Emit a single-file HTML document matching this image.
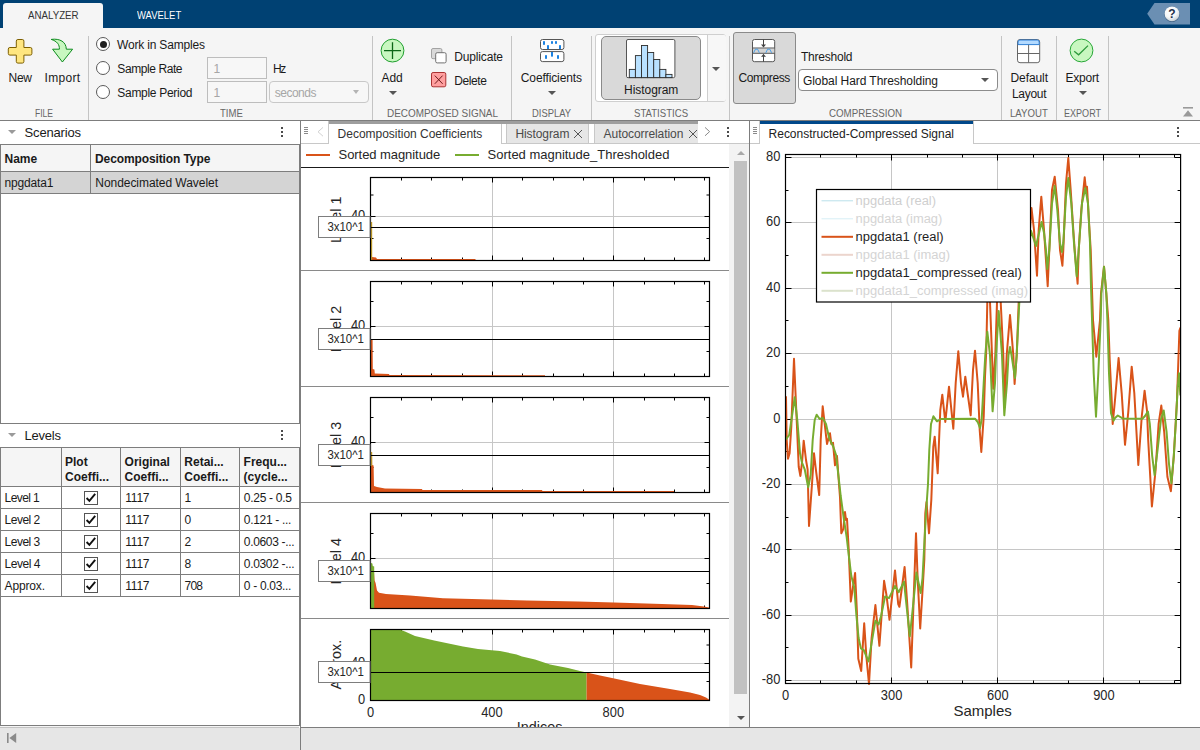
<!DOCTYPE html>
<html lang="en">
<head>
<meta charset="utf-8">
<title>Wavelet Signal Analyzer</title>
<style>
html,body{margin:0;padding:0;}
body{width:1200px;height:750px;overflow:hidden;position:relative;background:#fff;font-family:"Liberation Sans","DejaVu Sans",sans-serif;font-size:12px;color:#1a1a1a;}
.abs{position:absolute;}
.t{position:absolute;white-space:nowrap;line-height:16px;height:16px;}
.ui{font-family:"DejaVu Sans","Liberation Sans",sans-serif;}
#hdr{left:0;top:0;width:1200px;height:28px;background:#004173;}
#strip{left:0;top:28px;width:1200px;height:92px;background:#f5f5f5;}
#stripline{left:0;top:120px;width:1200px;height:1px;background:#7d7d7d;}
.vdiv{position:absolute;top:36px;width:1px;height:84px;background:#c4c4c4;}
.sec{position:absolute;top:105px;height:16px;line-height:16px;font-size:11.5px;color:#5a5a5a;white-space:nowrap;transform-origin:0 50%;}
.lbl{position:absolute;white-space:nowrap;font-size:12px;line-height:16px;color:#1a1a1a;transform-origin:0 50%;}
.c{transform-origin:50% 50%;text-align:center;}
.arrow{position:absolute;width:0;height:0;border-left:4px solid transparent;border-right:4px solid transparent;border-top:4px solid #5f5f5f;}
#status{left:0;top:728px;width:1200px;height:22px;background:#e6e6e6;}
</style>
</head>
<body>
<!-- HEADER -->
<div class="abs" id="hdr"></div>
<div class="abs" id="strip"></div>
<div class="abs" id="stripline"></div>
<div class="abs" id="status"></div>
<div class="abs" style="left:3px;top:3px;width:100px;height:26px;background:#f5f5f5;border-radius:3px 3px 0 0;"></div>
<div class="t" style="left:27.90px;top:7.00px;font-size:11px;line-height:16px;height:16px;color:#333;transform:scaleX(0.8838);transform-origin:0 50%;">ANALYZER</div>
<div class="t" style="left:137.00px;top:7.00px;font-size:11px;line-height:16px;height:16px;color:#fff;transform:scaleX(0.8603);transform-origin:0 50%;">WAVELET</div>
<svg class="abs" style="left:1146px;top:2px" width="46" height="24" viewBox="0 0 46 24"><defs><radialGradient id="hg" cx="0.4" cy="0.3" r="0.8"><stop offset="0" stop-color="#ffffff"/><stop offset="0.55" stop-color="#f4f6f7"/><stop offset="1" stop-color="#b9c3c9"/></radialGradient></defs><path d="M1.2 11.8 L8.5 1 H44 V22.6 H8.5 Z" fill="#6b8fb3"/><circle cx="26" cy="12.2" r="7.7" fill="#3d5f83"/><circle cx="26" cy="11.8" r="7.4" fill="url(#hg)"/><text x="26" y="16.2" text-anchor="middle" font-family="Liberation Sans, sans-serif" font-weight="bold" font-size="12" fill="#22304a">?</text></svg>
<div class="vdiv" style="left:88px"></div>
<div class="vdiv" style="left:372px"></div>
<div class="vdiv" style="left:511px"></div>
<div class="vdiv" style="left:591px"></div>
<div class="vdiv" style="left:729px"></div>
<div class="vdiv" style="left:1001px"></div>
<div class="vdiv" style="left:1056px"></div>
<div class="vdiv" style="left:1108px"></div>
<svg class="abs" style="left:6px;top:37px" width="28" height="28" viewBox="0 0 28 28"><path d="M11.9 2.5 h4.4 a1.6 1.6 0 0 1 1.6 1.6 v6.4 h6.4 a1.6 1.6 0 0 1 1.6 1.6 v4.4 a1.6 1.6 0 0 1 -1.6 1.6 h-6.4 v6.4 a1.6 1.6 0 0 1 -1.6 1.6 h-4.4 a1.6 1.6 0 0 1 -1.6 -1.6 v-6.4 h-6.4 a1.6 1.6 0 0 1 -1.6 -1.6 v-4.4 a1.6 1.6 0 0 1 1.6 -1.6 h6.4 v-6.4 a1.6 1.6 0 0 1 1.6 -1.6 z" fill="#ffe680" stroke="#7d5f00" stroke-width="1"/></svg>
<svg class="abs" style="left:49px;top:37px" width="26" height="28" viewBox="0 0 26 28"><path d="M2.2 2.4 C11 1.2 17.2 5 17.3 12.2 H23.6 L13.4 25 L3.6 12.2 H10.4 C10.6 7.5 8 4.2 2.2 2.4 Z" fill="#c8f7c0" stroke="#0d8c1d" stroke-width="1" stroke-linejoin="round"/></svg>
<div class="t" style="left:8.60px;top:70.00px;font-size:12px;line-height:16px;height:16px;color:#1a1a1a;letter-spacing:-0.363px;">New</div>
<div class="t" style="left:44.60px;top:70.00px;font-size:12px;line-height:16px;height:16px;color:#1a1a1a;letter-spacing:0.280px;">Import</div>
<div class="t" style="left:35.20px;top:105.00px;font-size:11px;line-height:16px;height:16px;color:#666;transform:scaleX(0.7785);transform-origin:0 50%;">FILE</div>
<div class="abs" style="left:96px;top:37px;width:14px;height:14px;border-radius:50%;background:#fff;border:1px solid #5a5a5a;box-sizing:border-box"></div>
<div class="abs" style="left:99.5px;top:40.5px;width:7px;height:7px;border-radius:50%;background:#1f1f1f"></div>
<div class="abs" style="left:96px;top:61px;width:14px;height:14px;border-radius:50%;background:#fff;border:1px solid #5a5a5a;box-sizing:border-box"></div>
<div class="abs" style="left:96px;top:85px;width:14px;height:14px;border-radius:50%;background:#fff;border:1px solid #5a5a5a;box-sizing:border-box"></div>
<div class="t" style="left:117.00px;top:37.20px;font-size:12px;line-height:16px;height:16px;color:#1a1a1a;letter-spacing:-0.179px;">Work in Samples</div>
<div class="t" style="left:117.30px;top:61.20px;font-size:12px;line-height:16px;height:16px;color:#1a1a1a;letter-spacing:-0.417px;">Sample Rate</div>
<div class="t" style="left:117.30px;top:85.20px;font-size:12px;line-height:16px;height:16px;color:#1a1a1a;letter-spacing:-0.296px;">Sample Period</div>
<div class="abs" style="left:207px;top:57px;width:60px;height:22px;background:#f7f7f7;border:1px solid #bdbdbd;box-sizing:border-box;"></div>
<div class="abs" style="left:207px;top:81px;width:60px;height:22px;background:#f7f7f7;border:1px solid #bdbdbd;box-sizing:border-box;"></div>
<div class="t" style="left:213.60px;top:61.20px;font-size:12px;line-height:16px;height:16px;color:#a6a6a6;">1</div>
<div class="t" style="left:213.60px;top:85.20px;font-size:12px;line-height:16px;height:16px;color:#a6a6a6;">1</div>
<div class="t" style="left:273.00px;top:61.20px;font-size:12px;line-height:16px;height:16px;color:#1a1a1a;letter-spacing:-1.325px;">Hz</div>
<div class="abs" style="left:269px;top:81px;width:100px;height:22px;background:#f7f7f7;border:1px solid #c8c8c8;box-sizing:border-box;border-radius:4px;"></div>
<div class="t" style="left:274.80px;top:85.20px;font-size:12px;line-height:16px;height:16px;color:#a6a6a6;letter-spacing:-0.508px;">seconds</div>
<div class="abs" style="left:352.5px;top:90px;width:0;height:0;border-left:3.5px solid transparent;border-right:3.5px solid transparent;border-top:4px solid #b4b4b4;"></div>
<div class="t" style="left:219.50px;top:105.00px;font-size:11px;line-height:16px;height:16px;color:#666;transform:scaleX(0.8686);transform-origin:0 50%;">TIME</div>
<svg class="abs" style="left:380px;top:38px" width="26" height="26" viewBox="0 0 26 26"><circle cx="12.5" cy="12.6" r="11.4" fill="#c8f7c0" stroke="#1f9e2e" stroke-width="1"/><path d="M4 12.6 H21 M12.5 4.2 V21" stroke="#0b6616" stroke-width="1.3" fill="none"/></svg>
<div class="t" style="left:381.50px;top:70.00px;font-size:12px;line-height:16px;height:16px;color:#1a1a1a;letter-spacing:-0.037px;">Add</div>
<div class="abs" style="left:389.0px;top:91.3px;width:0;height:0;border-left:4.0px solid transparent;border-right:4.0px solid transparent;border-top:4px solid #555;"></div>
<svg class="abs" style="left:430px;top:47px" width="18" height="18" viewBox="0 0 18 18"><rect x="1.5" y="1.5" width="10.4" height="10.2" rx="1.5" fill="#d9d9d9" stroke="#a3a3a3"/><rect x="5.7" y="5.7" width="10.4" height="10.2" rx="1.5" fill="#fff" stroke="#707070"/></svg>
<div class="t" style="left:454.20px;top:49.00px;font-size:12px;line-height:16px;height:16px;color:#1a1a1a;letter-spacing:-0.150px;">Duplicate</div>
<svg class="abs" style="left:430px;top:71px" width="18" height="18" viewBox="0 0 18 18"><rect x="1.5" y="1.5" width="14.3" height="14.3" rx="1.6" fill="#ff9f9f" stroke="#a93232"/><path d="M4.8 4.6 L12.6 12.8 M12.6 4.6 L4.8 12.8" stroke="#6d1b1b" stroke-width="1" fill="none"/></svg>
<div class="t" style="left:454.20px;top:73.00px;font-size:12px;line-height:16px;height:16px;color:#1a1a1a;letter-spacing:-0.390px;">Delete</div>
<div class="t" style="left:387.00px;top:105.00px;font-size:11px;line-height:16px;height:16px;color:#666;transform:scaleX(0.9034);transform-origin:0 50%;">DECOMPOSED SIGNAL</div>
<svg class="abs" style="left:539px;top:38px" width="27" height="26" viewBox="0 0 27 26"><rect x="1.5" y="1.5" width="23.4" height="10" rx="2" fill="#fff" stroke="#555"/><rect x="1.5" y="13.6" width="23.4" height="10" rx="2" fill="#fff" stroke="#555"/><g fill="#1b82e2"><rect x="4" y="3.2" width="2" height="3.6"/><rect x="8" y="7.2" width="2" height="3.8"/><rect x="12" y="3.2" width="2" height="2.6"/><rect x="16" y="3.2" width="2" height="2.6"/><rect x="20" y="7.2" width="2" height="3.8"/><rect x="6" y="17.2" width="2" height="3.6"/><rect x="12" y="14" width="2" height="4.6"/><rect x="18" y="17.2" width="2" height="3.6"/></g></svg>
<div class="t" style="left:520.80px;top:70.00px;font-size:12px;line-height:16px;height:16px;color:#1a1a1a;letter-spacing:-0.118px;">Coefficients</div>
<div class="abs" style="left:547.5px;top:91.3px;width:0;height:0;border-left:4.0px solid transparent;border-right:4.0px solid transparent;border-top:4px solid #555;"></div>
<div class="t" style="left:531.50px;top:105.00px;font-size:11px;line-height:16px;height:16px;color:#666;transform:scaleX(0.8548);transform-origin:0 50%;">DISPLAY</div>
<div class="abs" style="left:595px;top:34px;width:131px;height:68px;background:#fff;border:1px solid #cfcfcf;box-sizing:border-box;border-radius:3px;"></div>
<div class="abs" style="left:707px;top:35px;width:18px;height:66px;background:#f7f7f7;border-left:1px solid #cfcfcf;border-radius:0 2px 2px 0;"></div>
<div class="abs" style="left:601px;top:36px;width:100px;height:64px;background:#d9d9d9;border:1px solid #8a8a8a;box-sizing:border-box;border-radius:5px;"></div>
<svg class="abs" style="left:625px;top:38px" width="52" height="42" viewBox="625 38 52 42"><rect x="626.5" y="39.5" width="48.4" height="38.2" rx="1.5" fill="#fff" stroke="#555"/><rect x="629.3" y="69.4" width="6.1" height="8.2" fill="#b9e1ff" stroke="#2d2d2d" stroke-width="0.9"/><rect x="635.4" y="55.6" width="6.1" height="22.0" fill="#b9e1ff" stroke="#2d2d2d" stroke-width="0.9"/><rect x="641.5" y="45.5" width="6.1" height="32.1" fill="#b9e1ff" stroke="#2d2d2d" stroke-width="0.9"/><rect x="647.6" y="52.5" width="6.1" height="25.1" fill="#b9e1ff" stroke="#2d2d2d" stroke-width="0.9"/><rect x="653.7" y="59.5" width="6.1" height="18.1" fill="#b9e1ff" stroke="#2d2d2d" stroke-width="0.9"/><rect x="659.8" y="69.4" width="6.1" height="8.2" fill="#b9e1ff" stroke="#2d2d2d" stroke-width="0.9"/><rect x="665.9" y="74.4" width="6.1" height="3.2" fill="#b9e1ff" stroke="#2d2d2d" stroke-width="0.9"/></svg>
<div class="t" style="left:624.00px;top:82.00px;font-size:12px;line-height:16px;height:16px;color:#1a1a1a;letter-spacing:-0.041px;">Histogram</div>
<div class="abs" style="left:712.0px;top:67px;width:0;height:0;border-left:4.0px solid transparent;border-right:4.0px solid transparent;border-top:4px solid #555;"></div>
<div class="t" style="left:633.50px;top:105.00px;font-size:11px;line-height:16px;height:16px;color:#666;transform:scaleX(0.8727);transform-origin:0 50%;">STATISTICS</div>
<div class="abs" style="left:733px;top:32px;width:63px;height:72px;background:#d9d9d9;border:1px solid #8a8a8a;box-sizing:border-box;border-radius:3px;"></div>
<svg class="abs" style="left:751px;top:38px" width="26" height="26" viewBox="751 38 26 26"><rect x="752.5" y="39.5" width="22.2" height="22.2" rx="2" fill="#fff" stroke="#555"/><rect x="753" y="48.4" width="21.2" height="4.6" fill="#d4d4d4"/><path d="M752.5 48 H774.7 M752.5 53.3 H774.7" stroke="#555" stroke-width="1" fill="none"/><path d="M753.6 52.8 L755.4 49.2 L757.6 49.2 L759.4 52.8 M765.8 52.8 L767.6 49.2 L769.8 49.2 L771.6 52.8" stroke="#3c9cec" stroke-width="0.9" fill="none"/><path d="M763.5 39.5 V47 M763.5 61.7 V54.3" stroke="#444" stroke-width="1" fill="none"/><path d="M761 44.6 H766 L763.5 47.4 Z M761 56.7 H766 L763.5 53.9 Z" fill="#444"/></svg>
<div class="t" style="left:738.40px;top:70.00px;font-size:12px;line-height:16px;height:16px;color:#1a1a1a;letter-spacing:-0.389px;">Compress</div>
<div class="t" style="left:801.00px;top:49.00px;font-size:12px;line-height:16px;height:16px;color:#1a1a1a;letter-spacing:-0.234px;">Threshold</div>
<div class="abs" style="left:798px;top:69px;width:200px;height:22px;background:#fff;border:1px solid #8c8c8c;box-sizing:border-box;border-radius:4px;"></div>
<div class="t" style="left:803.00px;top:73.00px;font-size:12px;line-height:16px;height:16px;color:#1a1a1a;letter-spacing:-0.065px;">Global Hard Thresholding</div>
<div class="abs" style="left:980.5px;top:78px;width:0;height:0;border-left:4.0px solid transparent;border-right:4.0px solid transparent;border-top:4px solid #555;"></div>
<div class="t" style="left:829.00px;top:105.00px;font-size:11px;line-height:16px;height:16px;color:#666;transform:scaleX(0.8848);transform-origin:0 50%;">COMPRESSION</div>
<svg class="abs" style="left:1016px;top:38px" width="26" height="26" viewBox="1016 38 26 26"><rect x="1017.5" y="39.5" width="22.2" height="23.2" rx="2.5" fill="#fff" stroke="#666"/><path d="M1018 44.6 V42 a2 2 0 0 1 2 -2 H1037.2 a2 2 0 0 1 2 2 V44.6 Z" fill="#b3daff" stroke="#2f7fd6" stroke-width="1"/><path d="M1017.5 53.5 H1039.7 M1028.6 44.8 V62.7" stroke="#666" stroke-width="1" fill="none"/></svg>
<div class="t" style="left:1010.50px;top:70.00px;font-size:12px;line-height:16px;height:16px;color:#1a1a1a;letter-spacing:-0.083px;">Default</div>
<div class="t" style="left:1012.00px;top:86.00px;font-size:12px;line-height:16px;height:16px;color:#1a1a1a;letter-spacing:-0.300px;">Layout</div>
<div class="t" style="left:1010.00px;top:105.00px;font-size:11px;line-height:16px;height:16px;color:#666;transform:scaleX(0.8740);transform-origin:0 50%;">LAYOUT</div>
<svg class="abs" style="left:1069px;top:38px" width="26" height="26" viewBox="0 0 26 26"><circle cx="12.5" cy="12.5" r="11.4" fill="#c8f7c0" stroke="#28a738" stroke-width="1"/><path d="M5.2 13.2 L9.6 16.8 L19 7.6" stroke="#2d9a3b" stroke-width="1.3" fill="none"/></svg>
<div class="t" style="left:1065.60px;top:70.00px;font-size:12px;line-height:16px;height:16px;color:#1a1a1a;letter-spacing:-0.245px;">Export</div>
<div class="abs" style="left:1079.2px;top:91.3px;width:0;height:0;border-left:4.0px solid transparent;border-right:4.0px solid transparent;border-top:4px solid #555;"></div>
<div class="t" style="left:1064.00px;top:105.00px;font-size:11px;line-height:16px;height:16px;color:#666;transform:scaleX(0.8222);transform-origin:0 50%;">EXPORT</div>
<svg class="abs" style="left:1182px;top:106px" width="12" height="12" viewBox="0 0 12 12"><rect x="1" y="1" width="10" height="1.6" fill="#9a9a9a"/><path d="M6 4.2 L11 10.6 H1 Z" fill="#9a9a9a"/></svg>

<div class="abs" style="left:300px;top:121px;width:1px;height:629px;background:#7d7d7d;"></div>
<div class="abs" style="left:299px;top:144px;width:1px;height:280px;background:#7d7d7d;"></div>
<div class="abs" style="left:299px;top:447px;width:1px;height:279px;background:#7d7d7d;"></div>
<div class="abs" style="left:8.1px;top:130.2px;width:0;height:0;border-left:4.0px solid transparent;border-right:4.0px solid transparent;border-top:4px solid #9a9a9a;"></div>
<div class="t" style="left:24.60px;top:124.70px;font-size:13px;line-height:16px;height:16px;color:#1a1a1a;letter-spacing:-0.184px;">Scenarios</div>
<div class="abs" style="left:281px;top:127px;width:2px;height:2px;background:#4a4a4a;"></div>
<div class="abs" style="left:281px;top:131px;width:2px;height:2px;background:#4a4a4a;"></div>
<div class="abs" style="left:281px;top:135px;width:2px;height:2px;background:#4a4a4a;"></div>
<div class="abs" style="left:0px;top:144px;width:299px;height:1px;background:#7d7d7d;"></div>
<div class="abs" style="left:0px;top:144px;width:1px;height:280px;background:#7d7d7d;"></div>
<div class="abs" style="left:0px;top:447px;width:1px;height:279px;background:#7d7d7d;"></div>
<div class="abs" style="left:1px;top:145px;width:298px;height:26px;background:#f5f5f5;"></div>
<div class="abs" style="left:0px;top:171px;width:299px;height:1px;background:#7d7d7d;"></div>
<div class="abs" style="left:1px;top:172px;width:298px;height:21px;background:#d4d4d4;"></div>
<div class="abs" style="left:0px;top:193px;width:299px;height:1px;background:#7d7d7d;"></div>
<div class="abs" style="left:90px;top:145px;width:1px;height:48px;background:#7d7d7d;"></div>
<div class="t" style="left:4.60px;top:151.20px;font-size:12px;line-height:16px;height:16px;color:#1a1a1a;font-weight:bold;letter-spacing:-0.075px;">Name</div>
<div class="t" style="left:95.00px;top:151.20px;font-size:12px;line-height:16px;height:16px;color:#1a1a1a;font-weight:bold;letter-spacing:-0.107px;">Decomposition Type</div>
<div class="t" style="left:4.60px;top:175.00px;font-size:12px;line-height:16px;height:16px;color:#1a1a1a;letter-spacing:-0.186px;">npgdata1</div>
<div class="t" style="left:95.30px;top:175.00px;font-size:12px;line-height:16px;height:16px;color:#1a1a1a;letter-spacing:-0.049px;">Nondecimated Wavelet</div>
<div class="abs" style="left:0px;top:423px;width:299px;height:1px;background:#7d7d7d;"></div>
<div class="abs" style="left:8.1px;top:433.2px;width:0;height:0;border-left:4.0px solid transparent;border-right:4.0px solid transparent;border-top:4px solid #9a9a9a;"></div>
<div class="t" style="left:24.60px;top:427.70px;font-size:13px;line-height:16px;height:16px;color:#1a1a1a;letter-spacing:-0.245px;">Levels</div>
<div class="abs" style="left:281px;top:430px;width:2px;height:2px;background:#4a4a4a;"></div>
<div class="abs" style="left:281px;top:434px;width:2px;height:2px;background:#4a4a4a;"></div>
<div class="abs" style="left:281px;top:438px;width:2px;height:2px;background:#4a4a4a;"></div>
<div class="abs" style="left:0px;top:447px;width:299px;height:1px;background:#7d7d7d;"></div>
<div class="abs" style="left:1px;top:448px;width:298px;height:38px;background:#f5f5f5;"></div>
<div class="abs" style="left:0px;top:486px;width:299px;height:1px;background:#7d7d7d;"></div>
<div class="abs" style="left:0px;top:508px;width:299px;height:1px;background:#7d7d7d;"></div>
<div class="abs" style="left:0px;top:530px;width:299px;height:1px;background:#7d7d7d;"></div>
<div class="abs" style="left:0px;top:552px;width:299px;height:1px;background:#7d7d7d;"></div>
<div class="abs" style="left:0px;top:574px;width:299px;height:1px;background:#7d7d7d;"></div>
<div class="abs" style="left:0px;top:596px;width:299px;height:1px;background:#7d7d7d;"></div>
<div class="abs" style="left:61px;top:448px;width:1px;height:148px;background:#7d7d7d;"></div>
<div class="abs" style="left:120px;top:448px;width:1px;height:148px;background:#7d7d7d;"></div>
<div class="abs" style="left:180px;top:448px;width:1px;height:148px;background:#7d7d7d;"></div>
<div class="abs" style="left:239px;top:448px;width:1px;height:148px;background:#7d7d7d;"></div>
<div class="t" style="left:65.00px;top:454.20px;font-size:12px;line-height:16px;height:16px;color:#1a1a1a;font-weight:bold;">Plot</div>
<div class="t" style="left:65.00px;top:469.20px;font-size:12px;line-height:16px;height:16px;color:#1a1a1a;font-weight:bold;">Coeffi...</div>
<div class="t" style="left:124.60px;top:454.20px;font-size:12px;line-height:16px;height:16px;color:#1a1a1a;font-weight:bold;">Original</div>
<div class="t" style="left:124.60px;top:469.20px;font-size:12px;line-height:16px;height:16px;color:#1a1a1a;font-weight:bold;">Coeffi...</div>
<div class="t" style="left:184.30px;top:454.20px;font-size:12px;line-height:16px;height:16px;color:#1a1a1a;font-weight:bold;">Retai...</div>
<div class="t" style="left:184.30px;top:469.20px;font-size:12px;line-height:16px;height:16px;color:#1a1a1a;font-weight:bold;">Coeffi...</div>
<div class="t" style="left:243.60px;top:454.20px;font-size:12px;line-height:16px;height:16px;color:#1a1a1a;font-weight:bold;">Frequ...</div>
<div class="t" style="left:243.60px;top:469.20px;font-size:12px;line-height:16px;height:16px;color:#1a1a1a;font-weight:bold;">(cycle...</div>
<div class="t" style="left:4.60px;top:490.00px;font-size:12px;line-height:16px;height:16px;color:#1a1a1a;letter-spacing:-0.592px;">Level 1</div>
<div class="t" style="left:125.30px;top:490.00px;font-size:12px;line-height:16px;height:16px;color:#1a1a1a;letter-spacing:-0.225px;">1117</div>
<div class="t" style="left:184.60px;top:490.00px;font-size:12px;line-height:16px;height:16px;color:#1a1a1a;">1</div>
<div class="t" style="left:243.80px;top:490.00px;font-size:12px;line-height:16px;height:16px;color:#1a1a1a;letter-spacing:-0.283px;">0.25 - 0.5</div>
<svg class="abs" style="left:84px;top:490.5px" width="14" height="14" viewBox="0 0 14 14"><rect x="0.5" y="0.5" width="13" height="13" fill="#fff" stroke="#555"/><path d="M2.6 7 L5.4 9.9 L11.2 2.8" stroke="#111" stroke-width="1.9" fill="none"/></svg>
<div class="t" style="left:4.60px;top:512.00px;font-size:12px;line-height:16px;height:16px;color:#1a1a1a;letter-spacing:-0.508px;">Level 2</div>
<div class="t" style="left:125.30px;top:512.00px;font-size:12px;line-height:16px;height:16px;color:#1a1a1a;letter-spacing:-0.225px;">1117</div>
<div class="t" style="left:184.60px;top:512.00px;font-size:12px;line-height:16px;height:16px;color:#1a1a1a;">0</div>
<div class="t" style="left:243.80px;top:512.00px;font-size:12px;line-height:16px;height:16px;color:#1a1a1a;letter-spacing:-0.305px;">0.121 - ...</div>
<svg class="abs" style="left:84px;top:512.5px" width="14" height="14" viewBox="0 0 14 14"><rect x="0.5" y="0.5" width="13" height="13" fill="#fff" stroke="#555"/><path d="M2.6 7 L5.4 9.9 L11.2 2.8" stroke="#111" stroke-width="1.9" fill="none"/></svg>
<div class="t" style="left:4.60px;top:534.00px;font-size:12px;line-height:16px;height:16px;color:#1a1a1a;letter-spacing:-0.508px;">Level 3</div>
<div class="t" style="left:125.30px;top:534.00px;font-size:12px;line-height:16px;height:16px;color:#1a1a1a;letter-spacing:-0.225px;">1117</div>
<div class="t" style="left:184.60px;top:534.00px;font-size:12px;line-height:16px;height:16px;color:#1a1a1a;">2</div>
<div class="t" style="left:243.80px;top:534.00px;font-size:12px;line-height:16px;height:16px;color:#1a1a1a;letter-spacing:-0.330px;">0.0603 -...</div>
<svg class="abs" style="left:84px;top:534.5px" width="14" height="14" viewBox="0 0 14 14"><rect x="0.5" y="0.5" width="13" height="13" fill="#fff" stroke="#555"/><path d="M2.6 7 L5.4 9.9 L11.2 2.8" stroke="#111" stroke-width="1.9" fill="none"/></svg>
<div class="t" style="left:4.60px;top:556.00px;font-size:12px;line-height:16px;height:16px;color:#1a1a1a;letter-spacing:-0.458px;">Level 4</div>
<div class="t" style="left:125.30px;top:556.00px;font-size:12px;line-height:16px;height:16px;color:#1a1a1a;letter-spacing:-0.225px;">1117</div>
<div class="t" style="left:184.60px;top:556.00px;font-size:12px;line-height:16px;height:16px;color:#1a1a1a;">8</div>
<div class="t" style="left:243.80px;top:556.00px;font-size:12px;line-height:16px;height:16px;color:#1a1a1a;letter-spacing:-0.330px;">0.0302 -...</div>
<svg class="abs" style="left:84px;top:556.5px" width="14" height="14" viewBox="0 0 14 14"><rect x="0.5" y="0.5" width="13" height="13" fill="#fff" stroke="#555"/><path d="M2.6 7 L5.4 9.9 L11.2 2.8" stroke="#111" stroke-width="1.9" fill="none"/></svg>
<div class="t" style="left:4.60px;top:578.00px;font-size:12px;line-height:16px;height:16px;color:#1a1a1a;letter-spacing:-0.163px;">Approx.</div>
<div class="t" style="left:125.30px;top:578.00px;font-size:12px;line-height:16px;height:16px;color:#1a1a1a;letter-spacing:-0.225px;">1117</div>
<div class="t" style="left:184.60px;top:578.00px;font-size:12px;line-height:16px;height:16px;color:#1a1a1a;letter-spacing:-0.800px;">708</div>
<div class="t" style="left:243.80px;top:578.00px;font-size:12px;line-height:16px;height:16px;color:#1a1a1a;letter-spacing:-0.305px;">0 - 0.03...</div>
<svg class="abs" style="left:84px;top:578.5px" width="14" height="14" viewBox="0 0 14 14"><rect x="0.5" y="0.5" width="13" height="13" fill="#fff" stroke="#555"/><path d="M2.6 7 L5.4 9.9 L11.2 2.8" stroke="#111" stroke-width="1.9" fill="none"/></svg>
<div class="abs" style="left:0px;top:725px;width:299px;height:1px;background:#7d7d7d;"></div>
<div class="abs" style="left:0px;top:726px;width:299px;height:1px;background:#f5f5f5;"></div>
<div class="abs" style="left:0px;top:727px;width:299px;height:1px;background:#c4c4c4;"></div>

<div class="abs" style="left:301px;top:121px;width:448px;height:22px;background:#fff;"></div>
<div class="abs" style="left:301px;top:143px;width:448px;height:1px;background:#c8c8c8;"></div>
<div class="abs" style="left:301px;top:121px;width:28px;height:22px;background:#fff;border-right:1px solid #c8c8c8;box-sizing:border-box;"></div>
<div class="abs" style="left:304px;top:127px;width:4px;height:1px;background:#8a8a8a;"></div>
<div class="abs" style="left:304px;top:129px;width:4px;height:1px;background:#8a8a8a;"></div>
<div class="abs" style="left:304px;top:131px;width:4px;height:1px;background:#8a8a8a;"></div>
<div class="abs" style="left:304px;top:133px;width:4px;height:1px;background:#8a8a8a;"></div>
<svg class="abs" style="left:316px;top:126px" width="10" height="14" viewBox="0 0 10 14"><path d="M7 1.4 L2 5.8 L7 10.2" stroke="#d2d2d2" stroke-width="1" fill="none"/></svg>
<div class="abs" style="left:329px;top:121px;width:173px;height:23px;background:#fff;border-right:1px solid #c8c8c8;box-sizing:border-box;"></div>
<div class="t" style="left:337.60px;top:126.30px;font-size:12px;line-height:16px;height:16px;color:#333;letter-spacing:-0.017px;">Decomposition Coefficients</div>
<div class="abs" style="left:506px;top:124px;width:83px;height:19px;background:#e6e6e6;border:1px solid #c8c8c8;box-sizing:border-box;border-bottom:none;border-top:none;"></div>
<div class="t" style="left:515.40px;top:126.30px;font-size:12px;line-height:16px;height:16px;color:#4a4a4a;letter-spacing:-0.078px;">Histogram</div>
<div class="abs" style="left:594px;top:124px;width:104px;height:19px;background:#e6e6e6;border:1px solid #c8c8c8;box-sizing:border-box;border-bottom:none;border-top:none;border-right:none;"></div>
<div class="t" style="left:603.60px;top:126.30px;font-size:12px;line-height:16px;height:16px;color:#4a4a4a;letter-spacing:-0.068px;">Autocorrelation</div>
<svg class="abs" style="left:573.4px;top:129.3px" width="10" height="10" viewBox="0 0 10 10"><path d="M1 1 L9 9 M9 1 L1 9" stroke="#555" stroke-width="1" fill="none"/></svg>
<svg class="abs" style="left:687.6px;top:129.3px" width="10" height="10" viewBox="0 0 10 10"><path d="M1 1 L9 9 M9 1 L1 9" stroke="#555" stroke-width="1" fill="none"/></svg>
<div class="abs" style="left:698px;top:121px;width:51px;height:22px;background:#fff;"></div>
<div class="abs" style="left:329px;top:121px;width:369px;height:3px;background:#9e9e9e;"></div>
<svg class="abs" style="left:702px;top:126px" width="10" height="14" viewBox="0 0 10 14"><path d="M3 1.4 L7.6 5.6 L3 9.8" stroke="#8a8a8a" stroke-width="1" fill="none"/></svg>
<div class="abs" style="left:727px;top:127px;width:2px;height:2px;background:#4a4a4a;"></div>
<div class="abs" style="left:727px;top:131px;width:2px;height:2px;background:#4a4a4a;"></div>
<div class="abs" style="left:727px;top:135px;width:2px;height:2px;background:#4a4a4a;"></div>
<div class="abs" style="left:749px;top:121px;width:1px;height:607px;background:#7d7d7d;"></div>
<div class="abs" style="left:301px;top:727px;width:449px;height:1px;background:#7d7d7d;"></div>
<div class="abs" style="left:729px;top:144px;width:20px;height:583px;background:#f3f3f3;"></div>
<div class="abs" style="left:734px;top:161px;width:13px;height:533px;background:#c1c1c1;"></div>
<div class="abs" style="left:736.5px;top:151px;width:0;height:0;border-left:4.0px solid transparent;border-right:4.0px solid transparent;border-bottom:4px solid #a8a8a8;"></div>
<div class="abs" style="left:736.5px;top:716px;width:0;height:0;border-left:4.0px solid transparent;border-right:4.0px solid transparent;border-top:4px solid #555;"></div>
<div class="abs" style="left:306px;top:154px;width:24px;height:2px;background:#d95319;"></div>
<div class="t" style="left:338.60px;top:146.90px;font-size:13px;line-height:16px;height:16px;color:#262626;letter-spacing:-0.068px;">Sorted magnitude</div>
<div class="abs" style="left:455px;top:154px;width:24px;height:2px;background:#77ac30;"></div>
<div class="t" style="left:487.60px;top:146.90px;font-size:13px;line-height:16px;height:16px;color:#262626;letter-spacing:-0.012px;">Sorted magnitude_Thresholded</div>
<div class="abs" style="left:301px;top:167px;width:428px;height:1px;background:#1a1a1a;"></div>
<div class="abs" style="left:301px;top:270px;width:428px;height:1px;background:#8a8a8a;"></div>
<div class="abs" style="left:301px;top:386px;width:428px;height:1px;background:#8a8a8a;"></div>
<div class="abs" style="left:301px;top:502px;width:428px;height:1px;background:#8a8a8a;"></div>
<div class="abs" style="left:301px;top:618px;width:428px;height:1px;background:#8a8a8a;"></div>
<svg class="abs" style="left:301px;top:168px" width="428" height="559" viewBox="301 168 428 559" font-family="Liberation Sans, sans-serif"><text x="0" y="0" transform="translate(341 219.8) rotate(-90)" text-anchor="middle" font-size="14.4" fill="#262626">Level 1</text><text transform="translate(365.2 220.1) scale(0.92 1)" text-anchor="end" font-size="14" fill="#262626">40</text><path d="M492.5 177.5 V260.5" stroke="#c6c6c6" stroke-width="1"/><path d="M613.5 177.5 V260.5" stroke="#c6c6c6" stroke-width="1"/><path d="M370.5 216.5 H709.5" stroke="#c6c6c6" stroke-width="1"/><path d="M370.5 177.5 v5 M370.5 260.5 v-5 M401.5 177.5 v3 M401.5 260.5 v-3 M431.5 177.5 v3 M431.5 260.5 v-3 M462.5 177.5 v3 M462.5 260.5 v-3 M492.5 177.5 v5 M492.5 260.5 v-5 M522.5 177.5 v3 M522.5 260.5 v-3 M553.5 177.5 v3 M553.5 260.5 v-3 M583.5 177.5 v3 M583.5 260.5 v-3 M613.5 177.5 v5 M613.5 260.5 v-5 M644.5 177.5 v3 M644.5 260.5 v-3 M674.5 177.5 v3 M674.5 260.5 v-3 M704.5 177.5 v3 M704.5 260.5 v-3 M370.5 195 h3 M709.5 195 h-3 M370.5 216.5 h5 M709.5 216.5 h-5 M370.5 238.5 h3 M709.5 238.5 h-3 " stroke="#000" stroke-width="1" fill="none"/><path d="M371.0 260.0 L371.0 228.0 L372.0 228.0 L372.0 257.0 L376.0 257.6 L377.0 259.0 L475.5 259.0 L475.5 260.0 Z" fill="#d95319"/><rect x="371" y="222" width="1.2" height="38" fill="#c7a02a"/><path d="M370.5 227.5 H709.5" stroke="#000" stroke-width="1.2"/><rect x="370.5" y="177.5" width="339.0" height="83.0" fill="none" stroke="#000" stroke-width="1.2"/><rect x="318.5" y="216.5" width="51.5" height="21" fill="#fff" stroke="#7d7d7d" stroke-width="1"/><text x="327.4" y="230.9" font-size="12" fill="#262626" textLength="36.6" lengthAdjust="spacingAndGlyphs">3x10^1</text><text x="0" y="0" transform="translate(341 329) rotate(-90)" text-anchor="middle" font-size="14.4" fill="#262626">Level 2</text><text transform="translate(365.2 330.1) scale(0.92 1)" text-anchor="end" font-size="14" fill="#262626">40</text><path d="M492.5 281.5 V376.5" stroke="#c6c6c6" stroke-width="1"/><path d="M613.5 281.5 V376.5" stroke="#c6c6c6" stroke-width="1"/><path d="M370.5 326.5 H709.5" stroke="#c6c6c6" stroke-width="1"/><path d="M370.5 281.5 v5 M370.5 376.5 v-5 M401.5 281.5 v3 M401.5 376.5 v-3 M431.5 281.5 v3 M431.5 376.5 v-3 M462.5 281.5 v3 M462.5 376.5 v-3 M492.5 281.5 v5 M492.5 376.5 v-5 M522.5 281.5 v3 M522.5 376.5 v-3 M553.5 281.5 v3 M553.5 376.5 v-3 M583.5 281.5 v3 M583.5 376.5 v-3 M613.5 281.5 v5 M613.5 376.5 v-5 M644.5 281.5 v3 M644.5 376.5 v-3 M674.5 281.5 v3 M674.5 376.5 v-3 M704.5 281.5 v3 M704.5 376.5 v-3 M370.5 301.5 h3 M709.5 301.5 h-3 M370.5 326.5 h5 M709.5 326.5 h-5 M370.5 351.5 h3 M709.5 351.5 h-3 " stroke="#000" stroke-width="1" fill="none"/><path d="M371.0 376.0 L371.0 340.0 L372.6 340.0 L372.8 369.0 L374.4 369.4 L374.8 373.6 L389.0 374.0 L389.4 375.0 L545.0 375.2 L545.0 376.0 Z" fill="#d95319"/><path d="M370.5 339.5 H709.5" stroke="#000" stroke-width="1.2"/><rect x="370.5" y="281.5" width="339.0" height="95.0" fill="none" stroke="#000" stroke-width="1.2"/><rect x="318.5" y="328.5" width="51.5" height="21" fill="#fff" stroke="#7d7d7d" stroke-width="1"/><text x="327.4" y="342.9" font-size="12" fill="#262626" textLength="36.6" lengthAdjust="spacingAndGlyphs">3x10^1</text><text x="0" y="0" transform="translate(341 445) rotate(-90)" text-anchor="middle" font-size="14.4" fill="#262626">Level 3</text><text transform="translate(365.2 446.1) scale(0.92 1)" text-anchor="end" font-size="14" fill="#262626">40</text><path d="M492.5 397.5 V492.5" stroke="#c6c6c6" stroke-width="1"/><path d="M613.5 397.5 V492.5" stroke="#c6c6c6" stroke-width="1"/><path d="M370.5 442.5 H709.5" stroke="#c6c6c6" stroke-width="1"/><path d="M370.5 397.5 v5 M370.5 492.5 v-5 M401.5 397.5 v3 M401.5 492.5 v-3 M431.5 397.5 v3 M431.5 492.5 v-3 M462.5 397.5 v3 M462.5 492.5 v-3 M492.5 397.5 v5 M492.5 492.5 v-5 M522.5 397.5 v3 M522.5 492.5 v-3 M553.5 397.5 v3 M553.5 492.5 v-3 M583.5 397.5 v3 M583.5 492.5 v-3 M613.5 397.5 v5 M613.5 492.5 v-5 M644.5 397.5 v3 M644.5 492.5 v-3 M674.5 397.5 v3 M674.5 492.5 v-3 M704.5 397.5 v3 M704.5 492.5 v-3 M370.5 417.5 h3 M709.5 417.5 h-3 M370.5 442.5 h5 M709.5 442.5 h-5 M370.5 467.5 h3 M709.5 467.5 h-3 " stroke="#000" stroke-width="1" fill="none"/><path d="M371.0 492.0 L371.0 452.0 L372.0 452.0 L372.2 465.0 L373.6 465.4 L374.0 486.0 L377.0 487.0 L385.0 488.4 L422.0 489.0 L422.4 490.0 L542.0 490.0 L542.4 491.0 L674.0 491.0 L674.0 492.0 Z" fill="#d95319"/><rect x="371" y="452" width="1.2" height="14" fill="#c7a02a"/><path d="M370.5 455.5 H709.5" stroke="#000" stroke-width="1.2"/><rect x="370.5" y="397.5" width="339.0" height="95.0" fill="none" stroke="#000" stroke-width="1.2"/><rect x="318.5" y="444.5" width="51.5" height="21" fill="#fff" stroke="#7d7d7d" stroke-width="1"/><text x="327.4" y="458.9" font-size="12" fill="#262626" textLength="36.6" lengthAdjust="spacingAndGlyphs">3x10^1</text><text x="0" y="0" transform="translate(341 561.2) rotate(-90)" text-anchor="middle" font-size="14.4" fill="#262626">Level 4</text><text transform="translate(365.2 562.1) scale(0.92 1)" text-anchor="end" font-size="14" fill="#262626">40</text><path d="M492.5 513.5 V608.5" stroke="#c6c6c6" stroke-width="1"/><path d="M613.5 513.5 V608.5" stroke="#c6c6c6" stroke-width="1"/><path d="M370.5 558.5 H709.5" stroke="#c6c6c6" stroke-width="1"/><path d="M370.5 513.5 v5 M370.5 608.5 v-5 M401.5 513.5 v3 M401.5 608.5 v-3 M431.5 513.5 v3 M431.5 608.5 v-3 M462.5 513.5 v3 M462.5 608.5 v-3 M492.5 513.5 v5 M492.5 608.5 v-5 M522.5 513.5 v3 M522.5 608.5 v-3 M553.5 513.5 v3 M553.5 608.5 v-3 M583.5 513.5 v3 M583.5 608.5 v-3 M613.5 513.5 v5 M613.5 608.5 v-5 M644.5 513.5 v3 M644.5 608.5 v-3 M674.5 513.5 v3 M674.5 608.5 v-3 M704.5 513.5 v3 M704.5 608.5 v-3 M370.5 533.5 h3 M709.5 533.5 h-3 M370.5 558.5 h5 M709.5 558.5 h-5 M370.5 583.5 h3 M709.5 583.5 h-3 " stroke="#000" stroke-width="1" fill="none"/><path d="M374.0 608.0 L374.0 571.5 L374.6 580.5 L375.6 583.0 L377.0 590.6 L379.0 592.8 L386.0 594.0 L410.0 595.5 L443.0 598.3 L491.0 599.5 L527.0 600.6 L578.0 601.6 L614.0 602.5 L662.0 604.0 L692.0 605.0 L704.0 606.6 L709.0 607.6 L709.0 608.0 Z" fill="#d95319"/><path d="M371.0 608.0 L371.0 563.0 L372.4 563.4 L372.8 566.0 L374.2 566.4 L374.2 608.0 Z" fill="#77ac30"/><path d="M370.5 571.5 H709.5" stroke="#000" stroke-width="1.2"/><rect x="370.5" y="513.5" width="339.0" height="95.0" fill="none" stroke="#000" stroke-width="1.2"/><rect x="318.5" y="560.5" width="51.5" height="21" fill="#fff" stroke="#7d7d7d" stroke-width="1"/><text x="327.4" y="574.9" font-size="12" fill="#262626" textLength="36.6" lengthAdjust="spacingAndGlyphs">3x10^1</text><text x="0" y="0" transform="translate(341 664.6) rotate(-90)" text-anchor="middle" font-size="14.4" fill="#262626">Approx.</text><text transform="translate(365.2 667.1) scale(0.92 1)" text-anchor="end" font-size="14" fill="#262626">40</text><text transform="translate(365.2 704.1) scale(0.92 1)" text-anchor="end" font-size="14" fill="#262626">0</text><path d="M492.5 629.5 V700.5" stroke="#c6c6c6" stroke-width="1"/><path d="M613.5 629.5 V700.5" stroke="#c6c6c6" stroke-width="1"/><path d="M370.5 663.5 H709.5" stroke="#c6c6c6" stroke-width="1"/><path d="M370.5 629.5 v5 M370.5 700.5 v-5 M401.5 629.5 v3 M401.5 700.5 v-3 M431.5 629.5 v3 M431.5 700.5 v-3 M462.5 629.5 v3 M462.5 700.5 v-3 M492.5 629.5 v5 M492.5 700.5 v-5 M522.5 629.5 v3 M522.5 700.5 v-3 M553.5 629.5 v3 M553.5 700.5 v-3 M583.5 629.5 v3 M583.5 700.5 v-3 M613.5 629.5 v5 M613.5 700.5 v-5 M644.5 629.5 v3 M644.5 700.5 v-3 M674.5 629.5 v3 M674.5 700.5 v-3 M704.5 629.5 v3 M704.5 700.5 v-3 M370.5 645 h3 M709.5 645 h-3 M370.5 663.5 h5 M709.5 663.5 h-5 M370.5 681.5 h3 M709.5 681.5 h-3 " stroke="#000" stroke-width="1" fill="none"/><path d="M371.0 700.0 L371.0 629.5 L399.7 629.5 L405.0 631.6 L415.0 636.0 L434.2 640.4 L463.0 646.4 L478.0 649.0 L491.7 650.3 L500.0 651.0 L516.6 654.5 L522.0 656.6 L535.0 659.4 L550.0 664.4 L568.0 668.0 L580.0 671.0 L586.6 672.5 L586.6 700.0 Z" fill="#77ac30"/><path d="M586.6 700.0 L586.6 672.5 L600.0 675.6 L612.0 678.0 L640.0 684.0 L670.0 689.0 L690.0 692.6 L700.0 695.0 L706.0 697.4 L709.0 699.4 L709.0 700.0 Z" fill="#d95319"/><path d="M370.5 672.5 H709.5" stroke="#000" stroke-width="1.2"/><rect x="370.5" y="629.5" width="339.0" height="71.0" fill="none" stroke="#000" stroke-width="1.2"/><rect x="318.5" y="661.5" width="51.5" height="21" fill="#fff" stroke="#7d7d7d" stroke-width="1"/><text x="327.4" y="675.9" font-size="12" fill="#262626" textLength="36.6" lengthAdjust="spacingAndGlyphs">3x10^1</text><text transform="translate(370.5 717.2) scale(0.92 1)" text-anchor="middle" font-size="14" fill="#262626">0</text><text transform="translate(491.9 717.2) scale(0.92 1)" text-anchor="middle" font-size="14" fill="#262626">400</text><text transform="translate(613.3 717.2) scale(0.92 1)" text-anchor="middle" font-size="14" fill="#262626">800</text><text x="539.6" y="731.8" text-anchor="middle" font-size="14.4" fill="#262626">Indices</text></svg>

<div class="abs" style="left:750px;top:121px;width:450px;height:22px;background:#fff;"></div>
<div class="abs" style="left:750px;top:143px;width:450px;height:1px;background:#c8c8c8;"></div>
<div class="abs" style="left:750px;top:121px;width:10px;height:22px;background:#fff;border-right:1px solid #c8c8c8;box-sizing:border-box;"></div>
<div class="abs" style="left:753px;top:127px;width:4px;height:1px;background:#8a8a8a;"></div>
<div class="abs" style="left:753px;top:129px;width:4px;height:1px;background:#8a8a8a;"></div>
<div class="abs" style="left:753px;top:131px;width:4px;height:1px;background:#8a8a8a;"></div>
<div class="abs" style="left:753px;top:133px;width:4px;height:1px;background:#8a8a8a;"></div>
<div class="abs" style="left:760px;top:121px;width:214px;height:23px;background:#fff;border-right:1px solid #c8c8c8;box-sizing:border-box;"></div>
<div class="abs" style="left:760px;top:121px;width:213px;height:3px;background:#00488a;"></div>
<div class="t" style="left:768.60px;top:126.40px;font-size:12px;line-height:16px;height:16px;color:#222;letter-spacing:-0.024px;">Reconstructed-Compressed Signal</div>
<div class="abs" style="left:1177px;top:127px;width:2px;height:2px;background:#4a4a4a;"></div>
<div class="abs" style="left:1177px;top:131px;width:2px;height:2px;background:#4a4a4a;"></div>
<div class="abs" style="left:1177px;top:135px;width:2px;height:2px;background:#4a4a4a;"></div>
<div class="abs" style="left:750px;top:727px;width:450px;height:1px;background:#7d7d7d;"></div>
<svg class="abs" style="left:750px;top:144px" width="450" height="583" viewBox="750 144 450 583" font-family="Liberation Sans, sans-serif"><path d="M891.5 154.5 V683.5 M997.5 154.5 V683.5 M1103.5 154.5 V683.5 M785.5 680.5 H1180.6 M785.5 615.5 H1180.6 M785.5 549.5 H1180.6 M785.5 484.5 H1180.6 M785.5 419.5 H1180.6 M785.5 353.5 H1180.6 M785.5 288.5 H1180.6 M785.5 222.5 H1180.6 M785.5 157.5 H1180.6 " stroke="#c6c6c6" stroke-width="1" fill="none"/><path d="M785.5 154.5 v6 M785.5 683.5 v-6 M820.5 154.5 v3 M820.5 683.5 v-3 M856.5 154.5 v3 M856.5 683.5 v-3 M891.5 154.5 v6 M891.5 683.5 v-6 M927.5 154.5 v3 M927.5 683.5 v-3 M962.5 154.5 v3 M962.5 683.5 v-3 M997.5 154.5 v6 M997.5 683.5 v-6 M1033.5 154.5 v3 M1033.5 683.5 v-3 M1068.5 154.5 v3 M1068.5 683.5 v-3 M1103.5 154.5 v6 M1103.5 683.5 v-6 M1139.5 154.5 v3 M1139.5 683.5 v-3 M1174.5 154.5 v3 M1174.5 683.5 v-3 M785.5 680.5 h6 M1180.6 680.5 h-6 M785.5 647.5 h3 M1180.6 647.5 h-3 M785.5 615.5 h6 M1180.6 615.5 h-6 M785.5 582.5 h3 M1180.6 582.5 h-3 M785.5 549.5 h6 M1180.6 549.5 h-6 M785.5 517.5 h3 M1180.6 517.5 h-3 M785.5 484.5 h6 M1180.6 484.5 h-6 M785.5 451.5 h3 M1180.6 451.5 h-3 M785.5 419.5 h6 M1180.6 419.5 h-6 M785.5 386.5 h3 M1180.6 386.5 h-3 M785.5 353.5 h6 M1180.6 353.5 h-6 M785.5 320.5 h3 M1180.6 320.5 h-3 M785.5 288.5 h6 M1180.6 288.5 h-6 M785.5 255.5 h3 M1180.6 255.5 h-3 M785.5 222.5 h6 M1180.6 222.5 h-6 M785.5 190.5 h3 M1180.6 190.5 h-3 M785.5 157.5 h6 M1180.6 157.5 h-6 " stroke="#000" stroke-width="1" fill="none"/><clipPath id="cp"><rect x="785.5" y="152" width="395.1" height="534"/></clipPath><g clip-path="url(#cp)"><polyline points="786.0,397.0 786.7,440.0 788.0,458.7 789.6,453.3 791.3,426.7 794.0,358.7 796.7,420.0 798.7,466.7 800.4,476.0 802.0,462.7 803.7,440.7 806.0,460.0 807.6,469.3 809.0,526.0 812.0,484.0 814.0,453.3 816.0,470.7 819.2,495.0 820.7,440.0 822.7,406.3 824.7,424.0 827.0,444.0 830.0,433.3 831.3,444.0 833.0,442.7 835.0,465.3 837.0,456.0 838.7,480.0 840.0,497.3 841.3,533.3 843.3,529.0 845.0,512.0 846.0,520.0 847.0,518.7 848.7,549.3 850.8,601.6 855.1,573.0 856.9,612.0 858.3,658.8 861.2,671.0 864.2,623.3 866.4,657.0 869.0,684.0 871.6,638.0 875.4,605.0 879.4,645.8 884.1,580.8 886.4,594.7 889.5,619.8 895.0,570.4 898.2,604.0 899.4,606.8 904.6,567.0 907.2,603.3 911.2,667.5 913.2,612.0 916.0,533.3 917.6,577.3 920.2,628.5 922.8,586.0 924.3,560.0 925.3,513.3 926.5,502.0 929.0,533.3 931.3,500.0 933.3,446.7 934.7,436.7 937.7,473.3 940.3,410.0 942.3,394.7 945.3,422.0 949.0,386.7 953.3,428.7 955.7,383.0 958.3,351.3 961.0,383.3 963.0,396.7 965.3,376.7 967.7,394.0 970.7,415.3 973.0,370.0 975.0,350.7 977.7,383.0 979.7,430.0 981.3,452.0 983.7,416.7 985.0,376.7 986.3,350.0 987.3,302.0 988.7,288.0 990.0,302.0 992.0,355.0 993.3,388.7 995.3,355.0 997.0,302.0 998.8,283.0 1000.7,302.0 1003.3,355.0 1004.6,404.7 1006.7,355.0 1010.0,315.0 1013.3,355.0 1014.6,384.0 1016.7,355.0 1018.7,302.0 1021.0,250.0 1022.5,232.0 1024.5,262.0 1026.5,290.0 1028.5,250.0 1031.5,208.0 1034.0,230.0 1035.3,250.0 1037.0,275.7 1038.7,230.0 1041.3,196.7 1044.0,230.0 1045.3,250.0 1047.7,286.3 1049.3,250.0 1052.0,190.0 1054.7,176.7 1058.0,210.0 1060.0,250.0 1062.4,265.7 1063.3,250.0 1066.0,183.3 1068.3,158.0 1070.7,190.0 1073.3,230.0 1074.7,250.0 1077.6,283.7 1078.7,250.0 1081.3,210.0 1084.7,177.3 1086.0,190.0 1087.0,186.7 1088.7,216.7 1090.7,250.0 1093.0,320.0 1096.3,356.7 1100.0,320.0 1101.0,293.3 1104.0,266.7 1106.3,293.3 1108.3,320.0 1109.7,360.0 1111.7,400.0 1112.7,424.0 1115.0,400.0 1118.6,358.0 1121.7,393.3 1125.0,444.8 1128.2,412.8 1131.7,366.7 1134.3,393.0 1138.3,465.0 1141.8,416.0 1144.6,390.7 1147.0,410.7 1148.2,440.0 1151.9,506.4 1155.4,472.0 1158.6,424.0 1161.3,405.6 1164.2,432.0 1167.4,476.8 1170.9,491.2 1173.8,456.0 1177.0,400.0 1179.4,330.7 1180.3,328.0" fill="none" stroke="#d95319" stroke-width="2" stroke-linejoin="round" stroke-linecap="round"/><polyline points="786.1,439.3 789.3,434.7 792.0,416.0 794.7,397.3 797.3,420.0 800.0,453.3 802.0,462.7 804.7,469.3 808.2,487.3 810.7,474.7 812.7,440.0 814.7,420.0 816.7,414.7 819.6,419.0 822.7,418.0 826.0,424.0 829.3,438.7 833.3,446.7 836.0,454.7 838.7,478.0 840.7,496.0 844.0,520.0 846.7,537.3 848.7,554.7 851.3,576.0 854.3,587.7 856.4,615.5 858.6,638.0 860.9,648.4 863.8,650.2 868.5,661.4 871.6,643.2 875.4,620.7 878.6,624.5 881.2,615.5 885.1,596.4 889.0,598.1 895.0,586.0 898.8,592.1 904.0,581.7 906.3,603.3 909.8,636.3 912.4,612.0 916.4,572.5 920.7,593.0 922.5,578.0 924.0,550.0 926.0,513.3 928.0,484.0 929.3,450.0 931.0,424.0 933.4,416.3 937.0,421.3 941.0,419.0 975.0,418.7 977.7,422.0 980.0,428.0 981.7,419.3 983.7,383.3 985.3,355.0 987.3,331.7 990.0,355.0 992.6,411.3 995.0,383.0 996.0,355.0 998.7,311.0 1002.0,355.0 1004.3,415.3 1007.0,383.0 1008.5,355.0 1010.0,347.0 1011.5,355.0 1015.0,378.0 1016.7,355.0 1019.3,302.0 1022.0,255.0 1024.0,240.0 1026.5,262.0 1029.0,245.0 1031.0,230.7 1036.0,246.0 1041.6,222.0 1044.0,232.7 1046.0,250.0 1047.3,269.0 1049.3,250.0 1052.0,203.3 1054.7,186.0 1057.3,210.0 1060.0,243.3 1062.0,252.0 1063.3,243.0 1066.0,196.7 1068.3,178.0 1071.3,203.3 1074.0,243.3 1076.7,276.3 1078.7,250.0 1082.0,203.3 1085.3,188.0 1088.0,203.3 1090.0,243.3 1091.0,286.7 1093.7,373.3 1096.0,416.7 1098.3,373.3 1100.7,320.0 1101.4,293.3 1104.0,266.7 1106.3,293.3 1107.4,320.0 1109.0,373.3 1111.0,413.3 1113.5,420.8 1115.0,418.0 1117.8,415.5 1122.6,418.4 1142.6,418.7 1145.0,416.0 1147.9,411.5 1149.8,424.0 1152.2,456.0 1154.6,475.2 1157.8,448.0 1161.0,419.2 1163.7,410.4 1166.6,432.0 1169.0,464.0 1171.4,483.2 1173.8,456.0 1176.2,416.0 1177.7,386.7 1179.0,373.3 1180.3,394.7" fill="none" stroke="#77ac30" stroke-width="2" stroke-linejoin="round" stroke-linecap="round"/></g><rect x="785.5" y="154.5" width="395.0999999999999" height="529.0" fill="none" stroke="#000" stroke-width="1.2"/><text transform="translate(780.3 684.1) scale(0.92 1)" text-anchor="end" font-size="14" fill="#262626">-80</text><text transform="translate(780.3 619.1) scale(0.92 1)" text-anchor="end" font-size="14" fill="#262626">-60</text><text transform="translate(780.3 553.1) scale(0.92 1)" text-anchor="end" font-size="14" fill="#262626">-40</text><text transform="translate(780.3 488.1) scale(0.92 1)" text-anchor="end" font-size="14" fill="#262626">-20</text><text transform="translate(780.3 423.1) scale(0.92 1)" text-anchor="end" font-size="14" fill="#262626">0</text><text transform="translate(780.3 357.1) scale(0.92 1)" text-anchor="end" font-size="14" fill="#262626">20</text><text transform="translate(780.3 292.1) scale(0.92 1)" text-anchor="end" font-size="14" fill="#262626">40</text><text transform="translate(780.3 226.1) scale(0.92 1)" text-anchor="end" font-size="14" fill="#262626">60</text><text transform="translate(780.3 161.1) scale(0.92 1)" text-anchor="end" font-size="14" fill="#262626">80</text><text transform="translate(785.5 700.1) scale(0.92 1)" text-anchor="middle" font-size="14" fill="#262626">0</text><text transform="translate(891.6 700.1) scale(0.92 1)" text-anchor="middle" font-size="14" fill="#262626">300</text><text transform="translate(997.8 700.1) scale(0.92 1)" text-anchor="middle" font-size="14" fill="#262626">600</text><text transform="translate(1103.9 700.1) scale(0.92 1)" text-anchor="middle" font-size="14" fill="#262626">900</text><text x="953.4" y="715.6" font-size="14.6" fill="#262626" textLength="58.4" lengthAdjust="spacingAndGlyphs">Samples</text><rect x="816.5" y="189.5" width="214" height="112.5" fill="#fff" stroke="#000" stroke-width="1.2"/><path d="M821.5 200.8 H853" stroke="#b9e0ea" stroke-width="1"/><text x="855.6" y="205.1" font-size="12" fill="#cfcfcf" textLength="80.4" lengthAdjust="spacingAndGlyphs">npgdata (real)</text><path d="M821.5 218.8 H853" stroke="#d6eef5" stroke-width="1"/><text x="855.6" y="223.1" font-size="12" fill="#d4d4d4" textLength="86.7" lengthAdjust="spacingAndGlyphs">npgdata (imag)</text><path d="M821.5 236.8 H853" stroke="#d95319" stroke-width="2"/><text x="855.6" y="241.1" font-size="12" fill="#1f1f1f" textLength="88.0" lengthAdjust="spacingAndGlyphs">npgdata1 (real)</text><path d="M821.5 254.8 H853" stroke="#ecd5cd" stroke-width="2"/><text x="855.6" y="259.1" font-size="12" fill="#d4d4d4" textLength="94.4" lengthAdjust="spacingAndGlyphs">npgdata1 (imag)</text><path d="M821.5 272.8 H853" stroke="#77ac30" stroke-width="2"/><text x="855.6" y="277.1" font-size="12" fill="#1f1f1f" textLength="166.2" lengthAdjust="spacingAndGlyphs">npgdata1_compressed (real)</text><path d="M821.5 290.8 H853" stroke="#dbe2cc" stroke-width="2"/><text x="855.6" y="295.1" font-size="12" fill="#d4d4d4" textLength="172.4" lengthAdjust="spacingAndGlyphs">npgdata1_compressed (imag)</text></svg>

<svg class="abs" style="left:6px;top:732px" width="12" height="12" viewBox="0 0 12 12"><rect x="1" y="1" width="1.6" height="10" fill="#8a8a8a"/><path d="M10.2 1 V11 L3.4 6 Z" fill="#8a8a8a"/></svg>

</body>
</html>
